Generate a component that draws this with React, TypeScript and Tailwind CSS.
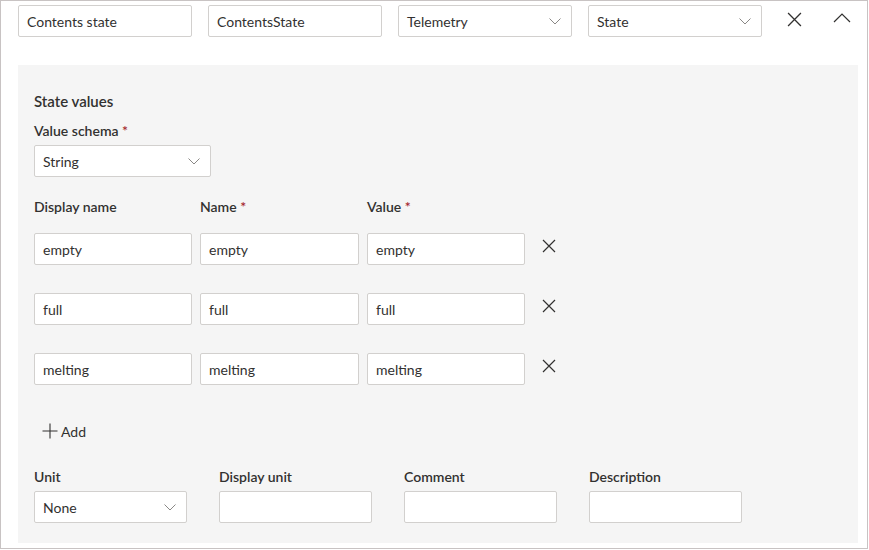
import React from "react";

const font = { fontFamily: "Lato, 'Noto Sans', sans-serif" };

const Chevron = () => (
  <svg width="12" height="7" viewBox="0 0 12 7" className="shrink-0">
    <path d="M0.5 0.5 L6 6 L11.5 0.5" fill="none" stroke="#8a8886" strokeWidth="1" />
  </svg>
);

const Cross = ({ size = 14 }: { size?: number }) => (
  <svg width={size} height={size} viewBox="0 0 14 14" className="shrink-0">
    <path d="M1 1 L13 13 M13 1 L1 13" fill="none" stroke="#323130" strokeWidth="1.2" />
  </svg>
);

const TextBox = ({ value = "", width }: { value?: string; width: string }) => (
  <div
    className={`${width} h-8 bg-white border border-[#d2d0ce] rounded-[2px] px-2 flex items-center text-[14px] text-[#323130]`}
  >
    {value}
  </div>
);

const Dropdown = ({ value, width }: { value: string; width: string }) => (
  <div
    className={`${width} h-8 bg-white border border-[#d2d0ce] rounded-[2px] pl-2 pr-[10px] flex items-center justify-between text-[14px] text-[#323130]`}
  >
    <span>{value}</span>
    <Chevron />
  </div>
);

const Label = ({ text, required }: { text: string; required?: boolean }) => (
  <div className="h-5 leading-5 text-[14px] font-semibold text-[#323130]">
    {text}
    {required && <span className="text-[#a4262c]"> *</span>}
  </div>
);

const rows = ["empty", "full", "melting"];

export default function App() {
  return (
    <div className="w-[869px] h-[550px] bg-white" style={font}>
      <div className="w-[868px] h-[549px] border border-[#c8c3c3] pl-[17px] pt-[4px]">
        {/* TOP ROW */}
        <div className="flex items-center gap-4">
          <TextBox value="Contents state" width="w-[174px]" />
          <TextBox value="ContentsState" width="w-[174px]" />
          <Dropdown value="Telemetry" width="w-[174px]" />
          <Dropdown value="State" width="w-[174px]" />
          <div className="ml-[9px] -mt-[4px] flex items-center">
            <Cross size={15} />
          </div>
          <div className="ml-[15px] -mt-[6px] flex items-center">
            <svg width="18" height="10" viewBox="0 0 18 10">
              <path d="M1 9 L9 1 L17 9" fill="none" stroke="#323130" strokeWidth="1.2" />
            </svg>
          </div>
        </div>

        {/* PANEL */}
        <div className="mt-[28px] w-[840px] bg-[#f5f5f5] pl-4 pt-[26px] pb-[20px]">
          <div className="h-5 leading-5 text-[15px] font-semibold text-[#323130]">State values</div>
          <div className="mt-[10px]">
            <Label text="Value schema" required />
          </div>
          <div className="mt-[4px]">
            <Dropdown value="String" width="w-[177px]" />
          </div>

          <div className="mt-[20px] flex gap-2">
            <div className="w-[158px]"><Label text="Display name" /></div>
            <div className="w-[159px]"><Label text="Name" required /></div>
            <div className="w-[158px]"><Label text="Value" required /></div>
          </div>

          <div className="mt-[16px] flex flex-col gap-[28px]">
            {rows.map((r) => (
              <div key={r} className="flex items-center gap-2">
                <TextBox value={r} width="w-[158px]" />
                <TextBox value={r} width="w-[159px]" />
                <TextBox value={r} width="w-[158px]" />
                <div className="ml-[9px] -mt-[6px]">
                  <Cross />
                </div>
              </div>
            ))}
          </div>

          <div className="mt-[36px] h-5 flex items-center pl-2 gap-[3px] text-[14px] text-[#323130]">
            <svg width="16" height="16" viewBox="0 0 16 16">
              <path d="M8 0.5 V15.5 M0.5 8 H15.5" fill="none" stroke="#323130" strokeWidth="1.1" />
            </svg>
            <span>Add</span>
          </div>

          <div className="mt-[26px] flex gap-8">
            <div className="w-[153px] flex flex-col gap-1">
              <Label text="Unit" />
              <Dropdown value="None" width="w-[153px]" />
            </div>
            <div className="w-[153px] flex flex-col gap-1">
              <Label text="Display unit" />
              <TextBox width="w-[153px]" />
            </div>
            <div className="w-[153px] flex flex-col gap-1">
              <Label text="Comment" />
              <TextBox width="w-[153px]" />
            </div>
            <div className="w-[153px] flex flex-col gap-1">
              <Label text="Description" />
              <TextBox width="w-[153px]" />
            </div>
          </div>
        </div>
      </div>
    </div>
  );
}
